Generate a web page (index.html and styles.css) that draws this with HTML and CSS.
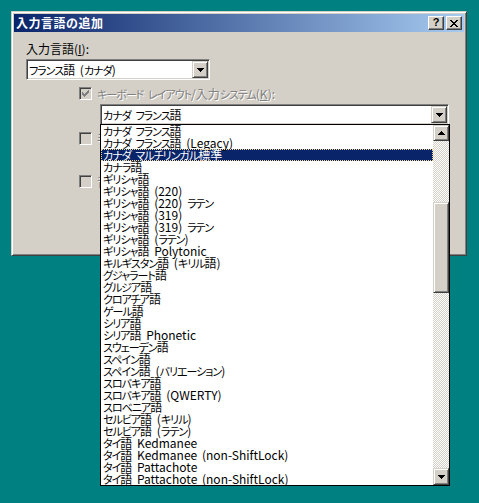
FILE: index.html
```html
<!DOCTYPE html>
<html lang="ja">
<head>
<meta charset="utf-8">
<title>入力言語の追加</title>
<link rel="stylesheet" href="styles.css">
</head>
<body>
<div class="window">
  <div class="titlebar">
    <span class="title">入力言語の追加</span>
    <div class="caption-btns">
      <span class="cap-btn help">?</span>
      <span class="cap-btn close"><svg width="8" height="7" viewBox="0 0 8 7" shape-rendering="crispEdges"><path d="M0 0h2v1h-2zM6 0h2v1h-2zM1 1h2v1h-2zM5 1h2v1h-2zM2 2h4v1h-4zM3 3h2v1h-2zM2 4h4v1h-4zM1 5h2v1h-2zM5 5h2v1h-2zM0 6h2v1h-2zM6 6h2v1h-2z" fill="#000"/></svg></span>
    </div>
  </div>
  <div class="body">
    <div class="label">入力言語(<u>I</u>):</div>
    <div class="combo combo-lang">
      <span class="combo-text"><span class="k">フランス</span>語 (<span class="k">カナダ</span>)</span>
      <span class="drop-btn"><svg width="7" height="4" viewBox="0 0 7 4" shape-rendering="crispEdges"><path d="M0 0h7v1h-7zM1 1h5v1h-5zM2 2h3v1h-3zM3 3h1v1h-1z" fill="#000"/></svg></span>
    </div>
    <div class="check-row row-kbd">
      <span class="cb"><svg width="7" height="7" viewBox="0 0 7 7" shape-rendering="crispEdges"><path d="M6 0h1v3h-1zM5 1h1v3h-1zM0 2h1v3h-1zM1 3h1v3h-1zM4 2h1v3h-1zM3 3h1v3h-1zM2 4h1v3h-1z" fill="#808080"/></svg></span>
      <span class="disabled-text"><span class="k">キーボード</span> <span class="k">レイアウト</span>/入力<span class="k">システム</span>(<u>K</u>):</span>
    </div>
    <div class="combo combo-kbd">
      <span class="combo-text"><span class="k">カナダ</span> <span class="k">フランス</span>語</span>
      <span class="drop-btn"><svg width="7" height="4" viewBox="0 0 7 4" shape-rendering="crispEdges"><path d="M0 0h7v1h-7zM1 1h5v1h-5zM2 2h3v1h-3zM3 3h1v1h-1z" fill="#000"/></svg></span>
    </div>
    <div class="check-row row-hand">
      <span class="cb"></span>
      <span class="disabled-text">手書き認識(<u>H</u>):</span>
    </div>
    <div class="check-row row-voice">
      <span class="cb"></span>
      <span class="disabled-text">音声(<u>S</u>):</span>
    </div>
  </div>
</div>

<div class="dropdown">
  <ul class="items">
    <li><span class="k">カナダ</span> <span class="k">フランス</span>語</li>
    <li><span class="k">カナダ</span> <span class="k">フランス</span>語 (Legacy)</li>
    <li class="selected"><span class="k">カナダ</span> <span class="k">マルチリンガル</span>標準</li>
    <li><span class="k">カナラ</span>語</li>
    <li><span class="k">ギリシャ</span>語</li>
    <li><span class="k">ギリシャ</span>語 (220)</li>
    <li><span class="k">ギリシャ</span>語 (220) <span class="k">ラテン</span></li>
    <li><span class="k">ギリシャ</span>語 (319)</li>
    <li><span class="k">ギリシャ</span>語 (319) <span class="k">ラテン</span></li>
    <li><span class="k">ギリシャ</span>語 (<span class="k">ラテン</span>)</li>
    <li><span class="k">ギリシャ</span>語 Polytonic</li>
    <li><span class="k">キルギスタン</span>語 (<span class="k">キリル</span>語)</li>
    <li><span class="k">グジャラート</span>語</li>
    <li><span class="k">グルジア</span>語</li>
    <li><span class="k">クロアチア</span>語</li>
    <li><span class="k">ゲール</span>語</li>
    <li><span class="k">シリア</span>語</li>
    <li><span class="k">シリア</span>語 Phonetic</li>
    <li><span class="k">スウェーデン</span>語</li>
    <li><span class="k">スペイン</span>語</li>
    <li><span class="k">スペイン</span>語 (<span class="k">バリエーション</span>)</li>
    <li><span class="k">スロバキア</span>語</li>
    <li><span class="k">スロバキア</span>語 (QWERTY)</li>
    <li><span class="k">スロベニア</span>語</li>
    <li><span class="k">セルビア</span>語 (<span class="k">キリル</span>)</li>
    <li><span class="k">セルビア</span>語 (<span class="k">ラテン</span>)</li>
    <li><span class="k">タイ</span>語 Kedmanee</li>
    <li><span class="k">タイ</span>語 Kedmanee (non-ShiftLock)</li>
    <li><span class="k">タイ</span>語 Pattachote</li>
    <li><span class="k">タイ</span>語 Pattachote (non-ShiftLock)</li>
  </ul>
  <div class="scrollbar">
    <span class="sb-btn"><svg width="7" height="4" viewBox="0 0 7 4" shape-rendering="crispEdges"><path d="M3 0h1v1h-1zM2 1h3v1h-3zM1 2h5v1h-5zM0 3h7v1h-7z" fill="#000"/></svg></span>
    <div class="track">
      <div class="thumb"></div>
    </div>
    <span class="sb-btn"><svg width="7" height="4" viewBox="0 0 7 4" shape-rendering="crispEdges"><path d="M0 0h7v1h-7zM1 1h5v1h-5zM2 2h3v1h-3zM3 3h1v1h-1z" fill="#000"/></svg></span>
  </div>
</div>
</body>
</html>
```

FILE: styles.css
```css
html, body {
  margin: 0;
  padding: 0;
}

body {
  width: 479px;
  height: 503px;
  overflow: hidden;
  position: relative;
  background: #008080;
  font-family: "Noto Sans CJK JP", sans-serif;
  font-size: 12px;
  color: #000;
  word-spacing: 2px;
}

.k {
  font-size: 11px;
  font-feature-settings: "palt";
  letter-spacing: -1px;
}

u {
  text-decoration: underline;
  text-underline-offset: 1px;
}

.window {
  position: absolute;
  left: 11px;
  top: 11px;
  width: 456px;
  height: 245px;
  box-sizing: border-box;
  background: #D4D0C8;
  border: 1px solid;
  border-color: #D4D0C8 #404040 #404040 #D4D0C8;
  box-shadow: inset 1px 1px #fff, inset -1px -1px #808080;
  padding: 2px;
}

.titlebar {
  height: 18px;
  display: flex;
  align-items: center;
  background: linear-gradient(to right, #0A246A, #A6CAF0);
  padding-left: 2px;
  padding-right: 2px;
}

.title {
  color: #fff;
  font-weight: bold;
  letter-spacing: 0.5px;
  line-height: 14px;
  flex: 1;
}

.caption-btns {
  display: flex;
  gap: 2px;
}

.cap-btn {
  width: 16px;
  height: 14px;
  box-sizing: border-box;
  background: #D4D0C8;
  border: 1px solid;
  border-color: #fff #404040 #404040 #fff;
  box-shadow: inset -1px -1px #808080;
  display: flex;
  align-items: center;
  justify-content: center;
}

.help {
  font-family: "Liberation Sans", sans-serif;
  font-weight: bold;
  font-size: 11px;
  line-height: 11px;
  padding-bottom: 1px;
}

.body {
  padding: 10px 0 0 12px;
}

.label {
  line-height: 14px;
  height: 14px;
}

.combo {
  margin-top: 3px;
  height: 21px;
  box-sizing: border-box;
  border: 1px solid;
  border-color: #808080 #fff #fff #808080;
  box-shadow: inset 1px 1px #404040, inset -1px -1px #D4D0C8;
  padding: 1px;
  background: #fff;
  display: flex;
  align-items: stretch;
}

.combo-lang {
  width: 184px;
}

.combo-kbd {
  margin-top: 4px;
  margin-left: 74px;
  width: 349px;
}

.combo-text {
  flex: 1;
  padding-left: 1px;
  line-height: 17px;
  white-space: nowrap;
}

.drop-btn,
.sb-btn {
  width: 16px;
  box-sizing: border-box;
  background: #D4D0C8;
  border: 1px solid;
  border-color: #D4D0C8 #404040 #404040 #D4D0C8;
  box-shadow: inset 1px 1px #fff, inset -1px -1px #808080;
  display: flex;
  align-items: center;
  justify-content: center;
}

.drop-btn svg {
  margin-top: 1px;
}

.check-row {
  display: flex;
  align-items: center;
  margin-left: 53px;
  height: 13px;
  gap: 5px;
}

.row-kbd { margin-top: 7px; }
.row-hand { margin-top: 7px; }
.row-voice { margin-top: 30px; }

.cb {
  width: 13px;
  height: 13px;
  box-sizing: border-box;
  border: 1px solid;
  border-color: #808080 #fff #fff #808080;
  box-shadow: inset 1px 1px #404040, inset -1px -1px #D4D0C8;
  background: #D4D0C8;
  display: flex;
  align-items: center;
  justify-content: center;
}

.disabled-text {
  color: #808080;
  text-shadow: 1px 1px 0 #fff;
  line-height: 13px;
  white-space: nowrap;
}

.dropdown {
  position: absolute;
  left: 100px;
  top: 124px;
  width: 350px;
  height: 362px;
  box-sizing: border-box;
  border: 1px solid #000;
  background: #fff;
  display: flex;
}

.items {
  list-style: none;
  margin: 0;
  padding: 0;
  flex: 1;
}

.items li {
  height: 12px;
  line-height: 12px;
  padding-left: 2px;
  white-space: nowrap;
}

.items li.selected {
  background: #0A246A;
  color: #fff;
  outline: 1px dotted #F5DB95;
  outline-offset: -1px;
}

.scrollbar {
  width: 16px;
  display: flex;
  flex-direction: column;
}

.sb-btn {
  height: 16px;
  flex: none;
}

.sb-btn:last-child {
  height: 17px;
}

.track {
  flex: 1;
  background-color: #fff;
  background-image: conic-gradient(#D4D0C8 25%, #fff 0 50%, #D4D0C8 0 75%, #fff 0);
  background-size: 2px 2px;
  padding-top: 61px;
}

.thumb {
  height: 91px;
  box-sizing: border-box;
  background: #D4D0C8;
  border: 1px solid;
  border-color: #D4D0C8 #404040 #404040 #D4D0C8;
  box-shadow: inset 1px 1px #fff, inset -1px -1px #808080;
}
```
